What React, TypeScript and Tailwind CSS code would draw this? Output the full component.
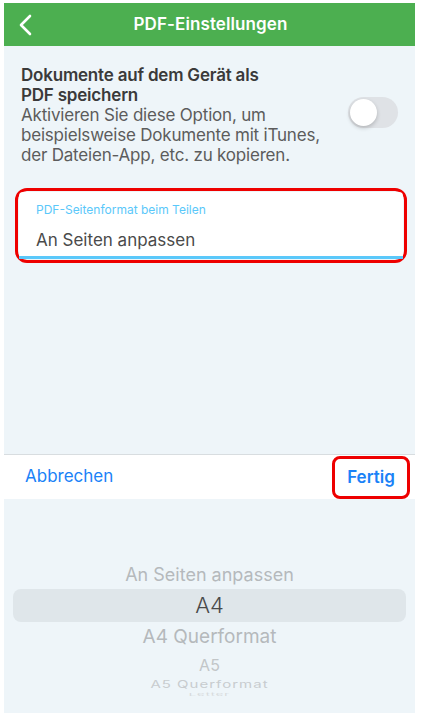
import React from "react";

export default function App() {
  return (
    <div className="w-[421px] h-[720px] bg-white pt-[3px] pl-[4px]" style={{ fontFamily: "Inter, 'Noto Sans', sans-serif" }}>
      <div className="w-[411px] h-[710px] flex flex-col bg-[#eef5f9] overflow-hidden">
        {/* Header */}
        <div className="h-[43px] bg-[#4caf50] flex items-center relative shrink-0">
          <svg className="absolute left-[14px] top-[11px]" width="16" height="22" viewBox="0 0 16 22" fill="none">
            <path d="M12 2 L3 11 L12 20" stroke="white" strokeWidth="2.6" strokeLinecap="round" strokeLinejoin="round" />
          </svg>
          <div className="w-full text-center text-white text-[17px] font-semibold tracking-[0.1px] pl-[2px]">PDF-Einstellungen</div>
        </div>

        {/* Setting */}
        <div className="flex items-start pt-[19px] pl-[17px] pr-[17px]">
          <div className="flex-1 text-[17px] leading-[20px] tracking-[-0.2px]">
            <div className="font-semibold text-[#3a3a3a] w-[250px]">Dokumente auf dem Gerät als PDF speichern</div>
            <div className="text-[#5c5c5c] w-[326px]">Aktivieren Sie diese Option, um beispielsweise Dokumente mit iTunes, der Dateien-App, etc. zu kopieren.</div>
          </div>
          <div className="mt-[32px] w-[50px] h-[31px] rounded-full bg-[#dfe2e6] p-[2px] shrink-0 -ml-[16px]">
            <div className="w-[27px] h-[27px] rounded-full bg-white shadow-[0_2px_4px_rgba(0,0,0,0.2)]"></div>
          </div>
        </div>

        {/* Field */}
        <div className="ml-[11px] mt-[23px] w-[392px] h-[75px] border-[3px] border-[#ee0000] rounded-[12px] p-[1px]">
          <div className="h-full bg-white rounded-t-[4px] flex flex-col border-b-[3px] border-[#5ac8fa]">
            <div className="pl-[17px] pt-[11px] text-[12px] leading-[14px] text-[#5ac8fa]">PDF-Seitenformat beim Teilen</div>
            <div className="pl-[17px] pt-[13px] text-[17px] leading-[20px] text-[#4a4a4a]">An Seiten anpassen</div>
          </div>
        </div>

        <div className="flex-1"></div>

        {/* Toolbar */}
        <div className="h-[45px] shrink-0 bg-white border-t border-[#d8dde0] flex items-center justify-between pl-[21px] pr-[5px]">
          <span className="text-[17px] text-[#1a82f7]">Abbrechen</span>
          <div className="w-[78px] h-[43px] mt-[1px] border-[3px] border-[#ee0000] rounded-[8px] flex items-center justify-center">
            <span className="text-[17px] font-semibold text-[#1a82f7]">Fertig</span>
          </div>
        </div>

        {/* Picker */}
        <div className="h-[214px] shrink-0 flex flex-col items-center pt-[64px] text-[#b5b9bc] overflow-hidden">
          <div className="text-[18px] leading-[24px] mb-[2px]">An Seiten anpassen</div>
          <div className="w-[393px] h-[33px] rounded-[8px] bg-[#dfe6ea] flex items-center justify-center text-[22px] font-light text-[#4a4a4a]">A4</div>
          <div className="text-[19px] leading-[28px] mt-[1px]">A4 Querformat</div>
          <div className="text-[16px] leading-[22px] mt-[3px] text-[#c2c6c8]">A5</div>
          <div className="text-[15px] leading-[14px] mt-[2px] tracking-[1px] text-[#c8cccf] scale-y-[0.7]">A5 Querformat</div>
          <div className="text-[13px] leading-[6px] tracking-[1px] text-[#d6dadc] scale-y-[0.3]">Letter</div>
        </div>
      </div>
    </div>
  );
}
